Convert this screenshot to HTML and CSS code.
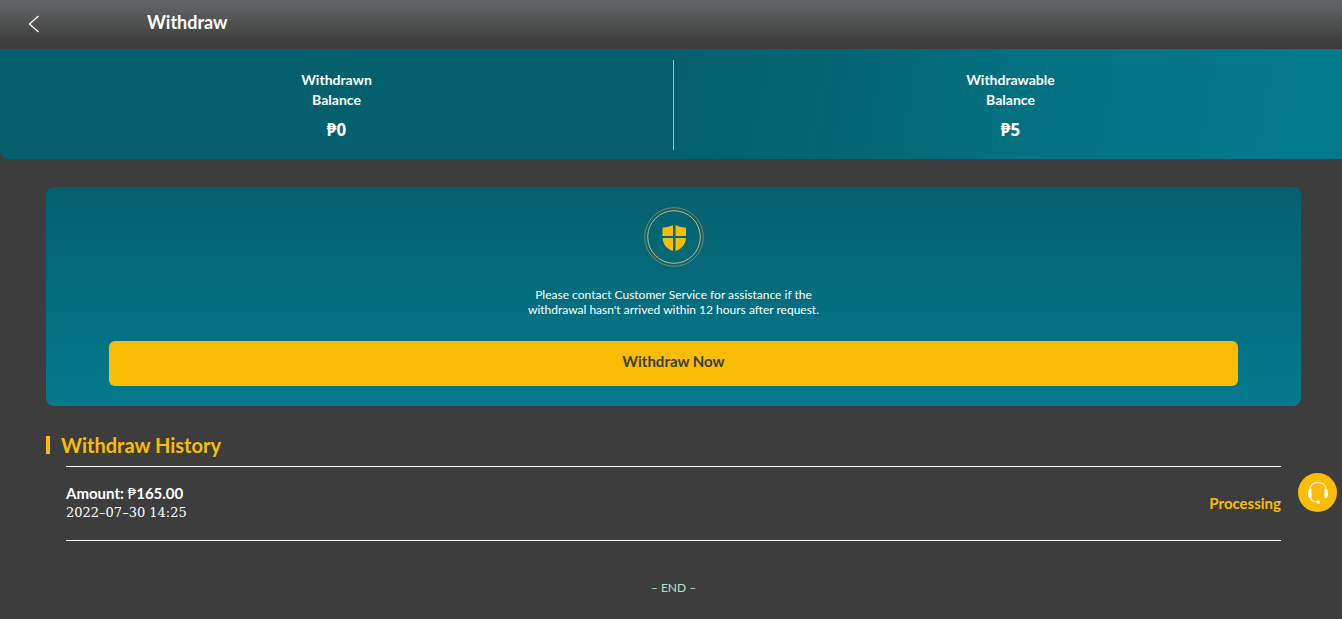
FILE: index.html
```html
<!DOCTYPE html>
<html lang="en">
<head>
<meta charset="utf-8">
<meta name="viewport" content="width=device-width, initial-scale=1">
<title>Withdraw</title>
<link rel="stylesheet" href="styles.css">
</head>
<body>
<header class="topbar">
  <button class="back" type="button" aria-label="Back">
    <svg width="12" height="18" viewBox="0 0 12 18" fill="none" stroke="#fff" stroke-width="1.3"><path d="M10.5 1 1.5 9l9 8"/></svg>
  </button>
  <h1 class="title">Withdraw</h1>
</header>
<main class="page">
  <section class="balances">
    <div class="balance">
      <span class="balance-label">Withdrawn<br>Balance</span>
      <span class="balance-value">₱0</span>
    </div>
    <div class="divider"></div>
    <div class="balance">
      <span class="balance-label">Withdrawable<br>Balance</span>
      <span class="balance-value">₱5</span>
    </div>
  </section>
  <section class="card">
    <svg class="shield" width="60" height="60" viewBox="0 0 60 60" fill="none">
      <circle cx="30" cy="30" r="29.3" stroke="#a58a5c" stroke-width=".8"/>
      <circle cx="30" cy="30" r="26.3" stroke="#d6b867" stroke-width="1"/>
      <path fill="#f9bd04" d="M29 18v11H18.500v-7.500Q18.500 20.800 19.200 20.500C23 20.200 26 19.500 29 18zM31.500 18v11H42v-7.500Q42 20.800 41.300 20.500C37.500 20.200 34.500 19.500 31.500 18zM18.600 31H29v13C23 42 19 37.500 18.600 31zM31.500 31h10.400C41.500 37.500 37.500 42 31.500 44z"/>
    </svg>
    <p class="notice">Please contact Customer Service for assistance if the withdrawal hasn't arrived within 12 hours after request.</p>
    <button class="withdraw" type="button">Withdraw Now</button>
  </section>
  <section class="history">
    <h2 class="history-title">Withdraw History</h2>
    <ul class="records">
      <li class="record">
        <div>
          <div class="amount">Amount: <span class="peso">₱</span>165.00</div>
          <time class="date" datetime="2022-07-30T14:25">2022–07–30 14:25</time>
        </div>
        <span class="status">Processing</span>
      </li>
    </ul>
    <p class="end">– END –</p>
  </section>
</main>
<button class="support" type="button" aria-label="Customer Service">
  <svg width="22" height="24" viewBox="0 0 22 24" fill="none" stroke="#fff" stroke-width="1.2">
    <path d="M3 9C3 4 6.500 1.500 11 1.500s8 2.500 8 7.500M3 15c.5 4 3 6 7 6"/>
    <path fill="#fff" stroke="none" d="M4.500 8v9H3C1.500 17 1 15 1 12.500S1.500 8 3 8zM17.500 8v9H19c1.500 0 2-2 2-4.500S20.500 8 19 8z"/>
    <rect x="9.500" y="19.500" width="3.500" height="3" rx="1" fill="#fff" stroke="none"/>
  </svg>
</button>
</body>
</html>
```
FILE: styles.css
```css
* { box-sizing: border-box; }
body {
  margin: 0;
  min-height: 100vh;
  background: #3d3d3d;
  color: #fff;
  font-family: Lato, "Open Sans", sans-serif;
}
h1, h2, p, ul { margin: 0; padding: 0; }
button { border: 0; font: inherit; cursor: pointer; }
.topbar {
  display: flex;
  align-items: center;
  padding: 9px 28px 14px;
  background: linear-gradient(#626365, #5a5b5c 25%, #3d3d3d 88%);
}
.page { overflow-x: clip; }
.back { display: flex; width: 119px; padding: 4px 0 0; background: none; }
.title { font-size: 18px; line-height: 26px; font-weight: 700; }
.balances {
  display: flex;
  margin-right: -5px;
  padding: 11px 0 9px;
  border-radius: 0 0 8px 8px;
  background: linear-gradient(100deg, #04606d 50%, #036674 64%, #03707f 74%, #047a8e 95%);
}
.balance {
  flex: 1;
  display: flex;
  flex-direction: column;
  align-items: center;
  gap: 8px;
  padding: 10px 0 9px;
  text-align: center;
  font-weight: 700;
}
.divider { width: 1px; background: #d9c01c; }
.balance-label { font-size: 14px; line-height: 20px; }
.balance-value { font-family: "Noto Sans", sans-serif; font-size: 17px; line-height: 23px; }
.card {
  display: flex;
  flex-direction: column;
  align-items: center;
  margin: 28px 41px 0 46px;
  padding: 20px 63px;
  border-radius: 8px;
  background: linear-gradient(#03606e, #047a8e);
}
.notice {
  max-width: 300px;
  margin: 20px 0 24px;
  font-size: 12px;
  line-height: 15px;
  text-align: center;
}
.withdraw {
  width: 100%;
  padding: 10px 0 15px;
  border-radius: 6px;
  background: #f9bd04;
  color: #3d3d3d;
  font-size: 15px;
  line-height: 20px;
  font-weight: 700;
}
.history { margin: 30px 61px 0 46px; }
.history-title {
  padding-left: 11px;
  border-left: 4px solid #f9bd04;
  color: #f9bd04;
  font-size: 20px;
  line-height: 18px;
}
.records { margin: 12px 0 0 20px; border-top: 1px solid #fff; list-style: none; }
.record {
  display: flex;
  align-items: center;
  justify-content: space-between;
  padding: 16px 0 17px;
  border-bottom: 1px solid #fff;
}
.amount { font-size: 15px; line-height: 20px; font-weight: 700; }
.peso { font-weight: 400; }
.date { display: block; font-family: "DejaVu Serif", serif; font-size: 13px; line-height: 20px; }
.status { color: #f9bd04; font-size: 15px; line-height: 20px; font-weight: 700; }
.end {
  margin: 37px 0 0 20px;
  color: #b5e6c5;
  font-size: 12px;
  line-height: 20px;
  text-align: center;
}
.support {
  position: fixed;
  right: 5px;
  bottom: 107px;
  display: flex;
  align-items: center;
  justify-content: center;
  width: 39px;
  height: 39px;
  padding: 0;
  border-radius: 50%;
  background: #f9bd04;
}
```
